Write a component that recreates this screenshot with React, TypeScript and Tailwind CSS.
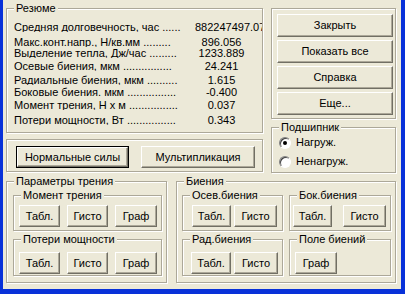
import React from 'react';

const etched = 'relative border border-[#ACA899] shadow-[inset_1px_1px_0_#fff,1px_1px_0_#fff]';
const face =
  'flex items-center justify-center bg-[#ECE9D8] border border-t-white border-l-white border-r-[#716F64] border-b-[#716F64] shadow-[inset_-1px_-1px_0_#ACA899] whitespace-nowrap leading-none';

function Btn({ className = '', children, def }: { className?: string; children: React.ReactNode; def?: boolean }) {
  if (def) {
    return (
      <div className={`border border-black ${className}`}>
        <div className={`${face} h-full w-full`}>{children}</div>
      </div>
    );
  }
  return <div className={`${face} ${className}`}>{children}</div>;
}

function Group({ title, className = '', children }: { title?: string; className?: string; children?: React.ReactNode }) {
  return (
    <div className={`${etched} ${className}`}>
      {title && (
        <span className="absolute -top-[7px] left-[7px] bg-[#ECE9D8] px-[2px] leading-[13px] whitespace-nowrap">
          {title}
        </span>
      )}
      {children}
    </div>
  );
}

function Radio({ checked, label, className = '' }: { checked?: boolean; label: string; className?: string }) {
  return (
    <div className={`flex h-[13px] items-center ${className}`}>
      <span className="flex h-[12px] w-[12px] items-center justify-center rounded-full border border-t-[#808080] border-l-[#808080] border-b-white border-r-white bg-white shadow-[inset_1px_1px_0_#404040]">
        {checked && <span className="h-[4px] w-[4px] rounded-full bg-black" />}
      </span>
      <span className="ml-[5px] leading-[13px]">{label}</span>
    </div>
  );
}

const rows = [
  { label: 'Средняя долговечность, час ......', value: '882247497.07', mt: 'mt-[13px]', left: true },
  { label: 'Макс.конт.напр., Н/кв.мм .........', value: '896.056', mt: 'mt-[5px]' },
  { label: 'Выделение тепла, Дж/час .........', value: '1233.889', mt: 'mt-[1px]' },
  { label: 'Осевые биения, мкм ................', value: '24.241', mt: 'mt-[3px]' },
  { label: 'Радиальные биения, мкм ..........', value: '1.615', mt: 'mt-[4px]' },
  { label: 'Боковые биения. мкм ................', value: '-0.400', mt: 'mt-[2px]' },
  { label: 'Момент трения, Н х м ................', value: '0.037', mt: 'mt-[3px]' },
  { label: 'Потери мощности, Вт ................', value: '0.343', mt: 'mt-[5px]' },
];

export default function App() {
  return (
    <div className="h-[294px] w-[405px] overflow-hidden border-b-[5px] border-l-[3px] border-r-[4px] border-[#0831D9] bg-[#ECE9D8] font-['Liberation_Sans',Arial,sans-serif] text-[11px] text-black">
      {/* top part */}
      <div className="flex h-[181px] pt-[8px]">
        <div className="ml-[3px] flex w-[257px] flex-col">
          <Group title="Резюме" className="h-[125px] w-[257px]">
            <div className="flex w-[255px] flex-col overflow-hidden pl-[7px]">
              {rows.map((r) => (
                <div key={r.label} className={`flex h-[10px] items-center leading-[10px] ${r.mt}`}>
                  <span className="w-[179px] shrink-0 overflow-hidden whitespace-nowrap">{r.label}</span>
                  <span className={`w-[57px] shrink-0 whitespace-nowrap ${r.left ? 'pl-[2px] text-left' : 'text-center'}`}>{r.value}</span>
                </div>
              ))}
            </div>
          </Group>
          <div className={`${etched} mt-[6px] flex h-[33px] w-[257px] gap-[12px] pl-[9px] pt-[6px]`}>
            <Btn def className="h-[22px] w-[113px]">Нормальные силы</Btn>
            <Btn className="h-[22px] w-[114px]">Мультипликация</Btn>
          </div>
        </div>

        <div className="ml-[8px] flex w-[125px] flex-col">
          <div className={`${etched} flex h-[111px] w-[125px] flex-col gap-[3px] pl-[5px] pt-[5px]`}>
            <Btn className="h-[23px] w-[116px]">Закрыть</Btn>
            <Btn className="h-[23px] w-[116px]">Показать все</Btn>
            <Btn className="h-[23px] w-[116px]">Справка</Btn>
            <Btn className="h-[23px] w-[116px]">Еще...</Btn>
          </div>
          <Group title="Подшипник" className="mt-[8px] h-[46px] w-[125px] pl-[7px] pt-[8px]">
            <Radio checked label="Нагруж." />
            <Radio label="Ненагруж." className="mt-[6px]" />
          </Group>
        </div>
      </div>

      {/* bottom part */}
      <div className="flex">
        <Group title="Параметры трения" className="ml-[3px] h-[102px] w-[161px] pl-[6px] pt-[13px]">
          <Group title="Момент трения" className="flex h-[36px] w-[149px] gap-[7px] pl-[5px] pt-[9px]">
            <Btn className="h-[22px] w-[41px]">Табл.</Btn>
            <Btn className="h-[22px] w-[41px]">Гисто</Btn>
            <Btn className="h-[22px] w-[42px]">Граф</Btn>
          </Group>
          <Group title="Потери мощности" className="mt-[8px] flex h-[37px] w-[149px] gap-[7px] pl-[5px] pt-[12px]">
            <Btn className="h-[22px] w-[41px]">Табл.</Btn>
            <Btn className="h-[22px] w-[41px]">Гисто</Btn>
            <Btn className="h-[22px] w-[42px]">Граф</Btn>
          </Group>
        </Group>

        <Group title="Биения" className="ml-[9px] h-[102px] w-[220px] pl-[5px] pt-[13px]">
          <div className="flex">
            <Group title="Осев.биения" className="flex h-[36px] w-[101px] gap-[3px] pl-[9px] pt-[9px]">
              <Btn className="h-[22px] w-[39px]">Табл.</Btn>
              <Btn className="h-[22px] w-[43px]">Гисто</Btn>
            </Group>
            <Group title="Бок.биения" className="ml-[6px] flex h-[36px] w-[102px] gap-[11px] pl-[3px] pt-[9px]">
              <Btn className="h-[22px] w-[39px]">Табл.</Btn>
              <Btn className="h-[22px] w-[43px]">Гисто</Btn>
            </Group>
          </div>
          <div className="mt-[8px] flex">
            <Group title="Рад.биения" className="flex h-[37px] w-[101px] gap-[3px] pl-[8px] pt-[12px]">
              <Btn className="h-[22px] w-[40px]">Табл.</Btn>
              <Btn className="h-[22px] w-[44px]">Гисто</Btn>
            </Group>
            <Group title="Поле биений" className="ml-[6px] flex h-[37px] w-[102px] pl-[5px] pt-[12px]">
              <Btn className="h-[22px] w-[42px]">Граф</Btn>
            </Group>
          </div>
        </Group>
      </div>
    </div>
  );
}
